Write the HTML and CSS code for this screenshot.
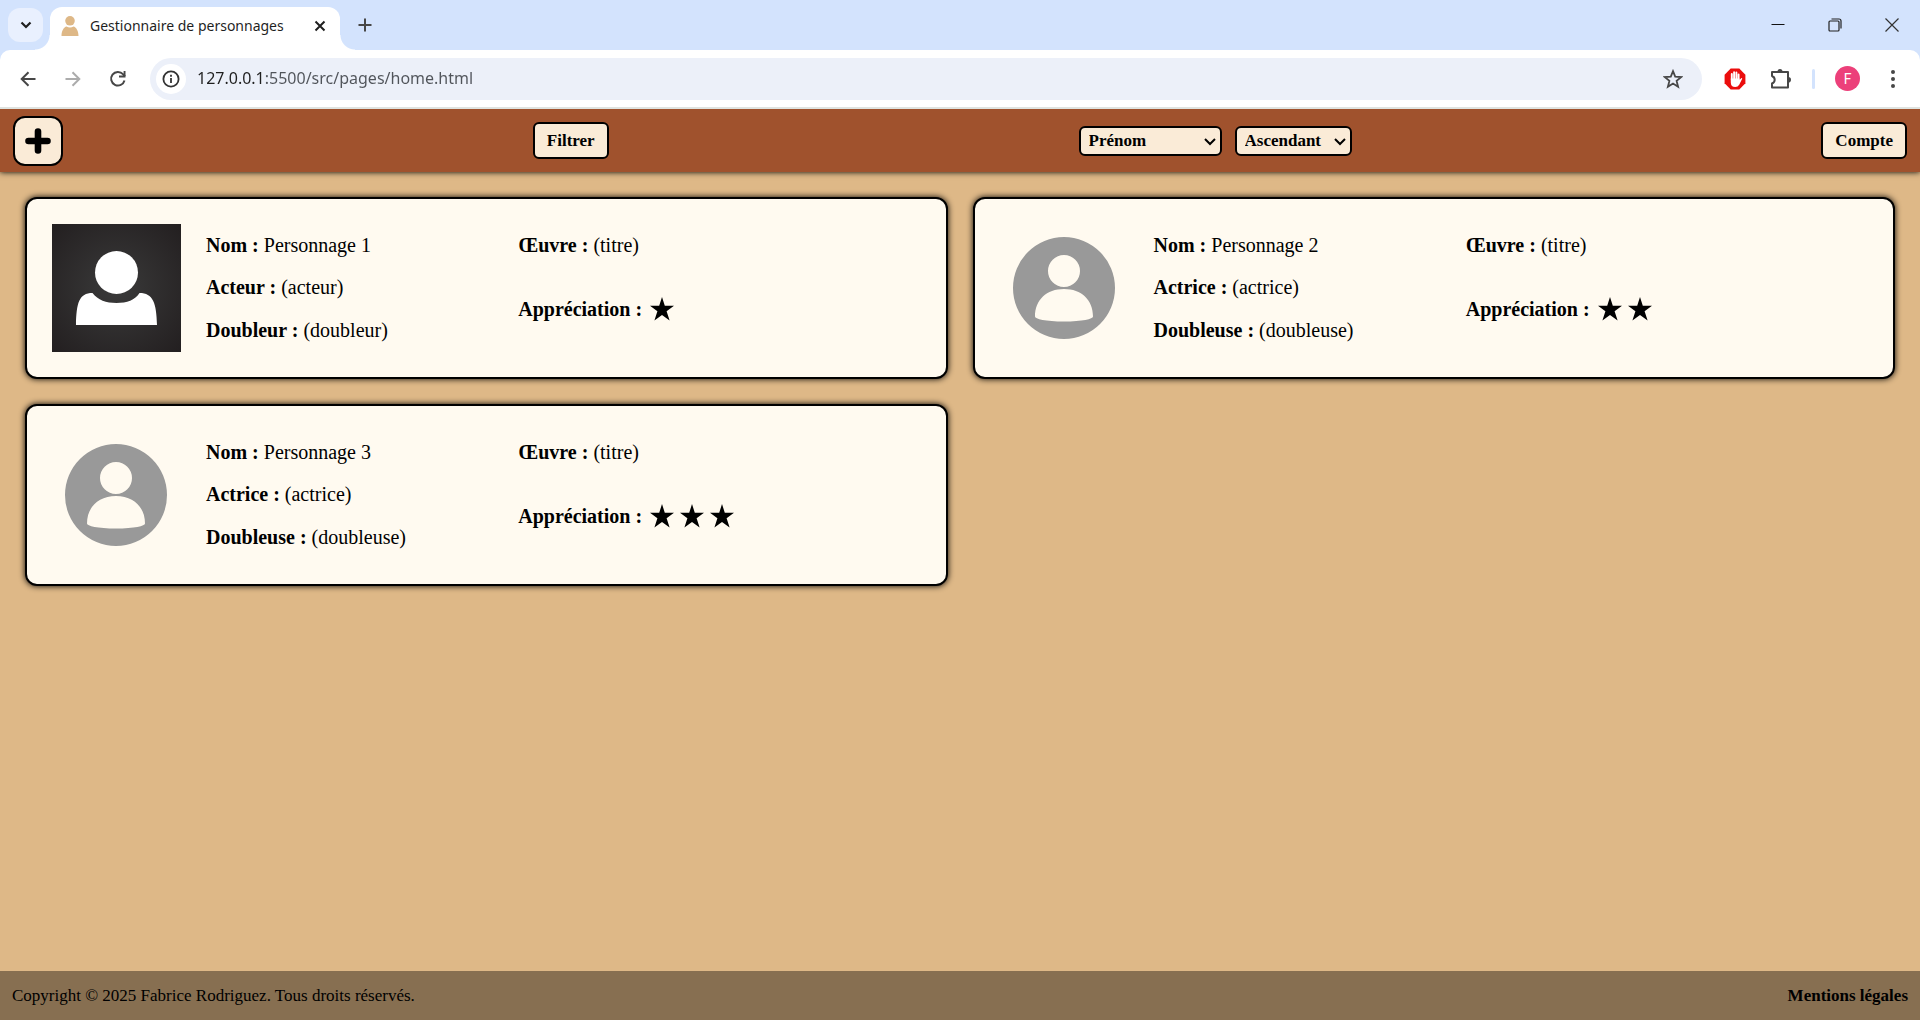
FILE: index.html
```html
<!DOCTYPE html>
<html lang="fr">
<head>
<meta charset="utf-8">
<title>Gestionnaire de personnages</title>
<link rel="stylesheet" href="styles.css">
</head>
<body>
<svg class="defs" aria-hidden="true">
  <symbol id="star" viewBox="0 0 30 30"><path d="M15 3l2.800 8.800H27l-7.400 5.400 3 9.300-7.600-5.600-7.600 5.600 3-9.300L3 11.800h9.200z"/></symbol>
  <symbol id="avatar" viewBox="0 0 128 128">
    <path fill="#999" fill-rule="evenodd" d="M64 13a51 51 0 1 1 0 102a51 51 0 1 1 0-102zM64 31a16 16 0 1 0 0 32a16 16 0 1 0 0-32zM64 65C46.500 65 35 76 35 92.500C35 95 45.500 97.500 64 97.500S93 95 93 92.500C93 76 81.500 65 64 65z"/>
  </symbol>
</svg>

<div class="browser">
  <div class="tabs">
    <button class="tab-search" aria-label="Rechercher dans les onglets"><svg width="12" height="8" viewBox="0 0 12 8"><path d="M1.500 1.500L6 6l4.500-4.500" fill="none" stroke="#1f1f1f" stroke-width="2.200"/></svg></button>
    <div class="tab">
      <svg width="18" height="20" viewBox="0 0 18 20" fill="#deb887"><circle cx="9" cy="4.800" r="4.800"/><path d="M0.500 20C0.500 14.500 3 11 5.500 10.500Q9 12.500 12.500 10.500C15 11 17.500 14.500 17.500 20z"/></svg>
      <span class="tab-title">Gestionnaire de personnages</span>
      <button class="icon tab-close" aria-label="Fermer l'onglet"><svg width="12" height="12" viewBox="0 0 12 12"><path d="M1.500 1.500l9 9M10.500 1.500l-9 9" stroke="#1f1f1f" stroke-width="2"/></svg></button>
    </div>
    <button class="icon new-tab" aria-label="Nouvel onglet"><svg width="14" height="14" viewBox="0 0 14 14"><path d="M7 .5v13M.5 7h13" stroke="#474747" stroke-width="2"/></svg></button>
    <div class="window-controls">
      <button class="icon" aria-label="Réduire"><svg width="14" height="14" viewBox="0 0 14 14"><path d="M.5 6.500h13" stroke="#111"/></svg></button>
      <button class="icon" aria-label="Restaurer"><svg width="14" height="14" viewBox="0 0 14 14" fill="none" stroke="#222" stroke-width="1.200"><rect x="1" y="3" width="10" height="10" rx="1"/><path d="M3.500 1H11Q13 1 13 3v7.500"/></svg></button>
      <button class="icon" aria-label="Fermer"><svg width="14" height="14" viewBox="0 0 14 14"><path d="M.5.5l13 13M13.500.5l-13 13" stroke="#333" stroke-width="1.200"/></svg></button>
    </div>
  </div>
  <div class="toolbar">
    <button class="icon" aria-label="Retour"><svg width="16" height="16" viewBox="0 0 16 16" fill="none" stroke="#474747" stroke-width="2"><path d="M15.500 8H2M8.500 1.200L1.700 8l6.800 6.800"/></svg></button>
    <button class="icon" aria-label="Avancer"><svg width="16" height="16" viewBox="0 0 16 16" fill="none" stroke="#acacac" stroke-width="2"><path d="M.5 8H14M7.500 1.200L14.300 8l-6.800 6.800"/></svg></button>
    <button class="icon" aria-label="Actualiser"><svg width="18" height="18" viewBox="0 0 18 18"><path d="M15.500 10.500A6.800 6.800 0 1 1 14 4.200L16 6.300" fill="none" stroke="#474747" stroke-width="2"/><path d="M16.500 1v6.500H10V5.600h4.600V1z" fill="#474747"/></svg></button>
    <div class="address">
      <button class="site-info" aria-label="Informations sur le site"><svg width="18" height="18" viewBox="0 0 18 18"><circle cx="9" cy="9" r="7.600" fill="none" stroke="#333" stroke-width="1.800"/><path d="M9 8v5M9 4.800v2" stroke="#333" stroke-width="1.800"/></svg></button>
      <input class="url" type="text" aria-label="Adresse" value="127.0.0.1:5500/src/pages/home.html">
      <button class="bookmark" aria-label="Favori"><svg width="20" height="20" viewBox="0 0 20 20"><path d="M10 2.200l2.200 5.500 5.900.4-4.500 3.800 1.500 5.800-5.100-3.200-5.100 3.200 1.500-5.800L1.900 8.100l5.900-.4z" fill="none" stroke="#474747" stroke-width="1.800"/></svg></button>
    </div>
    <div class="extensions">
      <button class="icon" aria-label="Bloqueur de publicités"><svg width="22" height="22" viewBox="0 0 22 22"><path d="M6.700.5h8.600l6.100 6.200v8.600l-6.100 6.200H6.700L.6 15.300V6.700z" fill="#eb0d0d"/><g stroke="#fff" stroke-width="1.900" stroke-linecap="round" fill="none"><path d="M7.800 12V6M10.100 11V4.200M12.400 11V4.500M14.600 12V6.500"/></g><path d="M6.800 10.500h8.700v1.500l1.700-1.700q1-.6 1 .5l-3 6q-1.300 2.200-3.900 2.200-4.500 0-4.500-4.500z" fill="#fff"/></svg></button>
      <button class="icon" aria-label="Extensions"><svg width="22" height="22" viewBox="0 0 22 22"><path d="M3 4h16v15.500H3V15.500Q5.700 14.500 5.700 11.800T3 8z" fill="none" stroke="#474747" stroke-width="2" stroke-linejoin="round"/><path d="M8.500 3.500a2.500 2.500 0 0 1 5 0zM19.200 9a2.800 2.800 0 0 1 0 5.600z" fill="#474747"/></svg></button>
      <span class="divider"></span>
      <button class="icon" aria-label="Profil"><span class="profile">F</span></button>
      <button class="icon" aria-label="Menu"><svg width="6" height="20" viewBox="0 0 6 20" fill="#474747"><circle cx="3" cy="3" r="2"/><circle cx="3" cy="10" r="2"/><circle cx="3" cy="17" r="2"/></svg></button>
    </div>
  </div>
</div>

<header class="header">
  <button class="add" aria-label="Ajouter"><svg width="26" height="26" viewBox="0 0 26 26"><path d="M13 3.500v19M3.500 13h19" stroke="#000" stroke-width="6.600" stroke-linecap="round"/></svg></button>
  <button class="btn">Filtrer</button>
  <div class="sorting">
    <div class="select">
      <select class="sort-key" aria-label="Trier par"><option>Prénom</option></select>
      <svg width="12" height="8" viewBox="0 0 12 8"><path d="M1 1l5 5 5-5"/></svg>
    </div>
    <div class="select">
      <select class="sort-order" aria-label="Ordre"><option>Ascendant</option></select>
      <svg width="12" height="8" viewBox="0 0 12 8"><path d="M1 1l5 5 5-5"/></svg>
    </div>
  </div>
  <button class="btn">Compte</button>
</header>

<main class="cards">
  <article class="card">
    <svg class="portrait" viewBox="0 0 129 128">
      <defs><radialGradient id="dark" r="0.700"><stop offset="0" stop-color="#3a3a3a"/><stop offset="1" stop-color="#231f20"/></radialGradient></defs>
      <rect width="129" height="128" fill="url(#dark)"/>
      <circle cx="64.500" cy="48.500" r="21.500" fill="#fff"/>
      <path fill="#fff" d="M24 101C24.500 79 27 69 40.500 69C46 76 54 79 64.500 79S83 76 87.500 69C101 69 104.500 79 105 101z"/>
    </svg>
    <div class="column">
      <p><b>Nom :</b> Personnage 1</p>
      <p><b>Acteur :</b> (acteur)</p>
      <p><b>Doubleur :</b> (doubleur)</p>
    </div>
    <div class="column">
      <p><b>Œuvre :</b> (titre)</p>
      <div class="rating"><b>Appréciation :</b><span class="stars"><svg><use href="#star"/></svg></span></div>
    </div>
  </article>
  <article class="card">
    <svg class="portrait" viewBox="0 0 129 128"><use href="#avatar" width="128" height="128"/></svg>
    <div class="column">
      <p><b>Nom :</b> Personnage 2</p>
      <p><b>Actrice :</b> (actrice)</p>
      <p><b>Doubleuse :</b> (doubleuse)</p>
    </div>
    <div class="column">
      <p><b>Œuvre :</b> (titre)</p>
      <div class="rating"><b>Appréciation :</b><span class="stars"><svg><use href="#star"/></svg><svg><use href="#star"/></svg></span></div>
    </div>
  </article>
  <article class="card">
    <svg class="portrait" viewBox="0 0 129 128"><use href="#avatar" width="128" height="128"/></svg>
    <div class="column">
      <p><b>Nom :</b> Personnage 3</p>
      <p><b>Actrice :</b> (actrice)</p>
      <p><b>Doubleuse :</b> (doubleuse)</p>
    </div>
    <div class="column">
      <p><b>Œuvre :</b> (titre)</p>
      <div class="rating"><b>Appréciation :</b><span class="stars"><svg><use href="#star"/></svg><svg><use href="#star"/></svg><svg><use href="#star"/></svg></span></div>
    </div>
  </article>
</main>

<footer class="footer">
  <span>Copyright © 2025 Fabrice Rodriguez. Tous droits réservés.</span>
  <a href="#">Mentions légales</a>
</footer>
</body>
</html>
```
FILE: styles.css
```css
* { box-sizing: border-box; }

body {
  margin: 0;
  min-height: 100vh;
  display: flex;
  flex-direction: column;
  background: #deb887;
  color: #000;
  font-family: "Liberation Serif", "Times New Roman", serif;
  font-size: 20px;
  line-height: 23px;
}

button, select, input { font: inherit; color: inherit; margin: 0; }
button { padding: 0; border: 0; background: none; }
svg { display: block; flex: none; }
.defs { position: absolute; width: 0; height: 0; }

/* Browser frame */
.browser {
  background: #d3e3fd;
  font-family: "Noto Sans", "Segoe UI", sans-serif;
  border-bottom: 2px solid #dfe3e0;
}
.tabs { display: flex; height: 50px; padding-left: 8px; }
.icon { display: flex; align-items: center; justify-content: center; width: 45px; }
.tab-search {
  display: flex;
  align-items: center;
  justify-content: center;
  width: 35px;
  height: 34px;
  margin: 8px 7px 0 0;
  border-radius: 12px;
  background: #e9f0fe;
}
.tab {
  position: relative;
  display: flex;
  align-items: center;
  width: 290px;
  margin-top: 7px;
  padding: 0 7px 6px 11px;
  border-radius: 12px 12px 0 0;
  background: #fff;
}
.tab::before, .tab::after {
  content: "";
  position: absolute;
  bottom: 0;
  width: 15px;
  height: 15px;
}
.tab::before { left: -15px; background: radial-gradient(circle at 0 0, transparent 14px, #fff 15px); }
.tab::after { right: -15px; background: radial-gradient(circle at 100% 0, transparent 14px, #fff 15px); }
.tab-title { flex: 1; margin-left: 11px; font-size: 14px; color: #1f1f1f; white-space: nowrap; }
.tab-close { width: 26px; }
.new-tab { width: 50px; }
.window-controls { display: flex; margin-left: auto; }
.window-controls .icon { width: 57px; }

.toolbar {
  display: flex;
  align-items: center;
  height: 57px;
  padding: 0 5px;
  border-radius: 10px 10px 0 0;
  background: #fff;
}
.address {
  display: flex;
  flex: 1;
  align-items: center;
  height: 42px;
  margin: 0 10px;
  padding: 0 19px 0 6px;
  border-radius: 21px;
  background: #ecf0f9;
}
.site-info {
  display: flex;
  align-items: center;
  justify-content: center;
  width: 30px;
  height: 30px;
  border-radius: 50%;
  background: #fff;
}
.url {
  flex: 1;
  min-width: 0;
  margin-left: 11px;
  padding: 0;
  border: 0;
  outline: 0;
  font-size: 16px;
  background: linear-gradient(90deg, #1f1f1f 69px, #50545a 69px);
  background-clip: text;
  color: transparent;
}
.extensions { display: flex; align-items: center; }
.divider { width: 3px; height: 20px; margin: 0 10px; border-radius: 2px; background: #d3e3fd; }
.profile {
  width: 25px;
  height: 25px;
  border-radius: 50%;
  background: #ec407a;
  color: #fff;
  font-family: Roboto, sans-serif;
  font-size: 14px;
  line-height: 26px;
}

/* Page header */
.header {
  display: flex;
  align-items: center;
  justify-content: space-between;
  height: 63px;
  padding: 0 13px;
  background: #a0522d;
  box-shadow: 0 0 6px #000;
  clip-path: inset(0 0 -12px 0);
  font-size: 17px;
  font-weight: bold;
}
.add, .btn, .select select { border: 2px solid #000; background: #faebd7; }
.add {
  display: flex;
  align-items: center;
  justify-content: center;
  width: 50px;
  height: 50px;
  border-radius: 12px;
}
.btn { height: 37px; padding: 0 12px; border-radius: 6px; }
.sorting { display: flex; gap: 13px; }
.select { position: relative; }
.select select {
  display: block;
  height: 30px;
  padding: 0 8px;
  border-radius: 6px;
  appearance: none;
}
.sort-key { width: 143px; }
.sort-order { width: 117px; }
.select svg {
  position: absolute;
  right: 6px;
  top: 12px;
  fill: none;
  stroke: #000;
  stroke-width: 2;
  pointer-events: none;
}

/* Character cards */
.cards {
  flex: 1;
  display: grid;
  grid-template-columns: 1fr 1fr;
  align-content: start;
  gap: 25px;
  padding: 25px;
}
.card {
  display: grid;
  grid-template-columns: 129px 287fr 402fr;
  gap: 25px;
  padding: 25px;
  border: 2px solid #000;
  border-radius: 12px;
  background: #fffaf0;
  box-shadow: 0 0 6px #000;
}
.portrait { width: 129px; height: 128px; }
.column { display: flex; flex-direction: column; justify-content: space-around; }
.column p { margin: 0; }
.rating { display: flex; align-items: center; height: 66px; }
.stars { display: flex; margin-left: 5px; }
.stars svg { width: 30px; height: 30px; }

.footer {
  display: flex;
  align-items: center;
  justify-content: space-between;
  height: 49px;
  padding: 0 12px;
  background: #876f51;
  font-size: 17px;
}
.footer a { color: inherit; font-weight: bold; text-decoration: none; }
```
